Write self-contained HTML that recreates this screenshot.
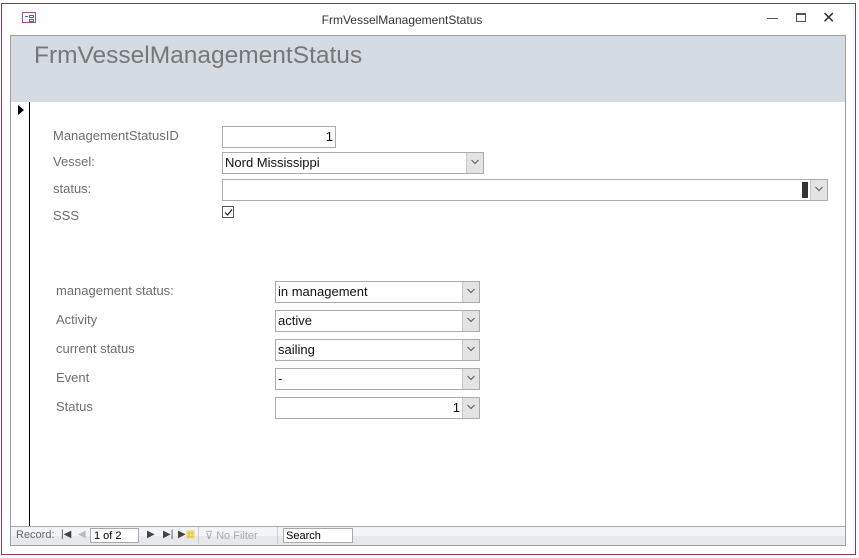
<!DOCTYPE html>
<html><head><style>
body{margin:0;width:859px;height:558px;background:#fff;position:relative;overflow:hidden;font-family:"Liberation Sans",sans-serif;}
.a{position:absolute;}
.lbl{position:absolute;font-size:13px;color:#6d6d6d;}
.box{position:absolute;border:1px solid #ababab;background:#fff;font-size:13px;color:#111;box-sizing:border-box;line-height:19px;padding-left:2px;}
.dd{position:absolute;right:0;top:0;bottom:0;width:16px;background:#e3e3e3;border-left:1px solid #c8c8c8;}
.dd svg{position:absolute;left:4px;top:6px;}
</style></head><body>
<div class="a" style="left:1px;top:3px;width:853px;height:550px;border:1px solid #8f3a4a;background:#fff;"></div>
<div class="a" style="left:22px;top:12px;width:14px;height:11px;border:1px solid #a0528a;background:#fff;box-sizing:border-box;"><div class="a" style="left:2px;top:3px;width:3px;height:1px;background:#3a6fb0"></div><div class="a" style="left:6px;top:2px;width:5px;height:3px;border:1px solid #3a6fb0;box-sizing:border-box"></div><div class="a" style="left:6px;top:6px;width:5px;height:3px;border:1px solid #3a6fb0;box-sizing:border-box"></div></div>
<div class="a" style="left:0;width:804px;top:13px;text-align:center;font-size:12px;color:#333;">FrmVesselManagementStatus</div>
<div class="a" style="left:767px;top:18px;width:11px;height:1px;background:#555"></div>
<div class="a" style="left:796px;top:13px;width:10px;height:9px;border:1px solid #555;border-top-width:2px;box-sizing:border-box"></div>
<div class="a" style="left:822px;top:8px;font-size:16px;color:#333">✕</div>
<div class="a" style="left:10px;top:35px;width:836px;height:511px;border:1px solid #a0a0a0;box-sizing:border-box;"></div>
<div class="a" style="left:11px;top:36px;width:834px;height:66px;background:#d5dbe3;"></div>
<div class="a" style="left:34px;top:42px;font-size:24.5px;color:#777;">FrmVesselManagementStatus</div>
<div class="a" style="left:29px;top:102px;width:1px;height:424px;background:#000"></div>
<div class="a" style="left:18px;top:105px;width:0;height:0;border-left:6px solid #000;border-top:5px solid transparent;border-bottom:5px solid transparent"></div>
<div class="lbl" style="left:53px;top:128px">ManagementStatusID</div>
<div class="lbl" style="left:53px;top:154px">Vessel:</div>
<div class="lbl" style="left:53px;top:181px">status:</div>
<div class="lbl" style="left:53px;top:208px">SSS</div>
<div class="box" style="left:222px;top:126px;width:114px;height:22px;text-align:right;padding-right:2px">1</div>
<div class="box" style="left:222px;top:152px;width:262px;height:22px;">Nord Mississippi<div class="dd"><svg width="8" height="6"><path d="M0.5 1L4 4.5L7.5 1" stroke="#555" fill="none"/></svg></div></div>
<div class="box" style="left:222px;top:179px;width:606px;height:22px;"><div class="a" style="right:19px;top:2px;width:6px;height:16px;background:#333"></div><div class="dd"><svg width="8" height="6"><path d="M0.5 1L4 4.5L7.5 1" stroke="#555" fill="none"/></svg></div></div>
<div class="a" style="left:222px;top:206px;width:12px;height:12px;border:1px solid #555;box-sizing:border-box"><svg class="a" style="left:1px;top:1px" width="9" height="9"><path d="M1 4.5L3.5 7L8 1.5" stroke="#222" fill="none" stroke-width="1.2"/></svg></div>
<div class="lbl" style="left:56px;top:283px">management status:</div>
<div class="lbl" style="left:56px;top:312px">Activity</div>
<div class="lbl" style="left:56px;top:341px">current status</div>
<div class="lbl" style="left:56px;top:370px">Event</div>
<div class="lbl" style="left:56px;top:399px">Status</div>
<div class="box" style="left:275px;top:281px;width:205px;height:22px">in management<div class="dd"><svg width="8" height="6"><path d="M0.5 1L4 4.5L7.5 1" stroke="#555" fill="none"/></svg></div></div>
<div class="box" style="left:275px;top:310px;width:205px;height:22px">active<div class="dd"><svg width="8" height="6"><path d="M0.5 1L4 4.5L7.5 1" stroke="#555" fill="none"/></svg></div></div>
<div class="box" style="left:275px;top:339px;width:205px;height:22px">sailing<div class="dd"><svg width="8" height="6"><path d="M0.5 1L4 4.5L7.5 1" stroke="#555" fill="none"/></svg></div></div>
<div class="box" style="left:275px;top:368px;width:205px;height:22px">-<div class="dd"><svg width="8" height="6"><path d="M0.5 1L4 4.5L7.5 1" stroke="#555" fill="none"/></svg></div></div>
<div class="box" style="left:275px;top:397px;width:205px;height:22px;text-align:right;padding-right:19px">1<div class="dd"><svg width="8" height="6"><path d="M0.5 1L4 4.5L7.5 1" stroke="#555" fill="none"/></svg></div></div>
<div class="a" style="left:11px;top:526px;width:834px;height:19px;background:linear-gradient(#f2f4f7,#f2f4f7 50%,#e6e8ec 50%);border-top:1px solid #a8a8a8;box-sizing:border-box"></div>
<div class="a" style="left:16px;top:529px;font-size:11px;color:#666">Record:</div>
<div class="a" style="left:61px;top:529px;font-size:10px;color:#444">|◀</div>
<div class="a" style="left:78px;top:529px;font-size:10px;color:#bbb">◀</div>
<div class="a" style="left:90px;top:528px;width:49px;height:15px;border:1px solid #aaa;background:#fff;font-size:11px;line-height:14px;padding-left:3px;box-sizing:border-box">1 of 2</div>
<div class="a" style="left:147px;top:529px;font-size:10px;color:#444">▶</div>
<div class="a" style="left:163px;top:529px;font-size:10px;color:#444">▶|</div>
<div class="a" style="left:178px;top:529px;font-size:10px;color:#444">▶<span style="color:#e8c020">▦</span></div>
<div class="a" style="left:198px;top:527px;width:1px;height:17px;background:#ccc"></div>
<div class="a" style="left:205px;top:529px;font-size:11px;color:#aaa">⊽ No Filter</div>
<div class="a" style="left:277px;top:527px;width:1px;height:17px;background:#ccc"></div>
<div class="a" style="left:283px;top:528px;width:70px;height:15px;border:1px solid #aaa;background:#fff;font-size:11px;line-height:14px;padding-left:2px;box-sizing:border-box">Search</div>
</body></html>
